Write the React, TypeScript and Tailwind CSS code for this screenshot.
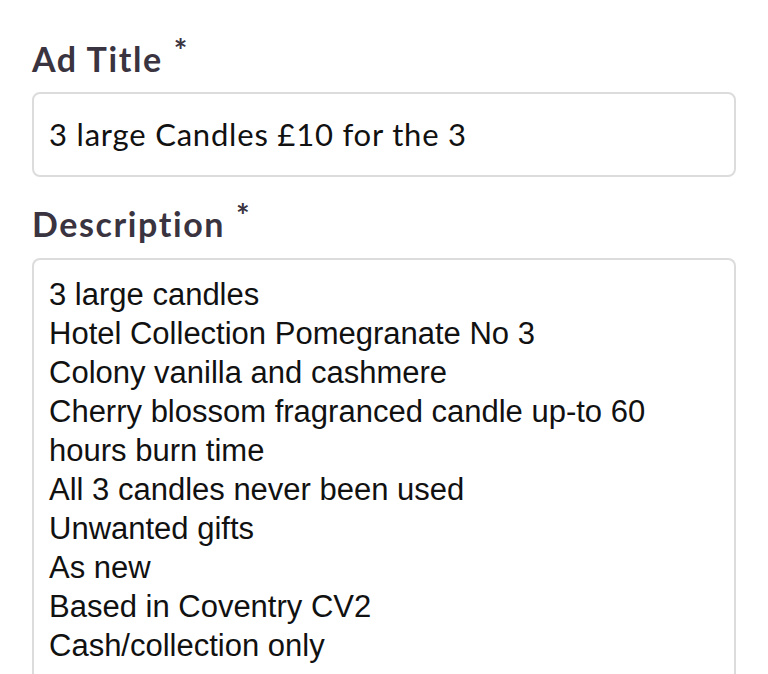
import React from 'react';

const descriptionLines = [
  '3 large candles',
  'Hotel Collection Pomegranate No 3',
  'Colony vanilla and cashmere',
  'Cherry blossom fragranced candle up-to 60',
  'hours burn time',
  'All 3 candles never been used',
  'Unwanted gifts',
  'As new',
  'Based in Coventry CV2',
  'Cash/collection only',
];

function FieldLabel({ children }: { children: React.ReactNode }) {
  return (
    <div className="flex items-start h-[52px] font-['Lato',sans-serif] text-[#3a3340]">
      <span className="text-[34px] font-bold leading-[52px] tracking-[1.6px]">{children}</span>
      <span className="ml-[11px] mt-[2px] text-[32px] font-bold leading-none">*</span>
    </div>
  );
}

export default function App() {
  return (
    <div className="h-[674px] w-[768px] overflow-hidden bg-white px-8 pt-[33px]">
      <FieldLabel>Ad Title</FieldLabel>
      <div className="mt-[7px] flex h-[85px] items-center rounded-[8px] border-2 border-[#dcdcdc] px-[15px] font-['Lato',sans-serif] text-[31px] tracking-[0.8px] text-[#111]">
        3 large Candles £10 for the 3
      </div>
      <div className="mt-[21px]">
        <FieldLabel>Description</FieldLabel>
      </div>
      <div className="mt-[8px] rounded-t-[8px] border-2 border-b-0 border-[#dcdcdc] px-[15px] pt-[15px] pb-8 font-['Liberation_Sans',Arial,sans-serif] text-[31px] leading-[39px] text-[#111]">
        {descriptionLines.map((line) => (
          <div key={line}>{line}</div>
        ))}
      </div>
    </div>
  );
}
